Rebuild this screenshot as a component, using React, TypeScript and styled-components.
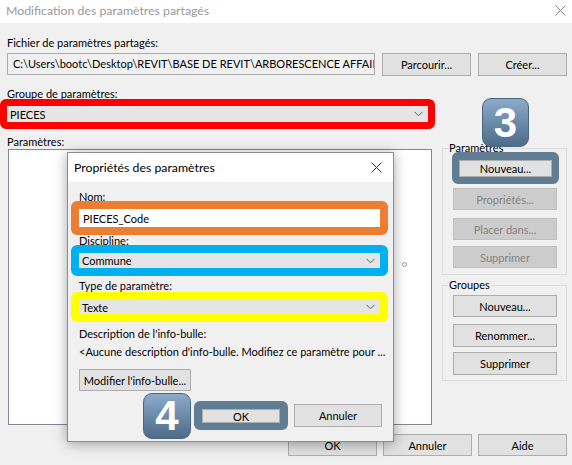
import React from "react";
import styled, { createGlobalStyle } from "styled-components";

const GlobalStyle = createGlobalStyle`
  body {
    margin: 0;
    background: #f0f0f0;
  }
  * {
    box-sizing: border-box;
  }
`;

const Chevron = () => (
  <svg width="9" height="6" viewBox="0 0 9 6">
    <path d="M0.5 0.8 L4.5 4.8 L8.5 0.8" fill="none" stroke="#606060" strokeWidth="1" />
  </svg>
);

const CloseIcon = ({ color }: { color: string }) => (
  <svg width="11" height="11" viewBox="0 0 11 11">
    <path d="M0.5 0.5 L10.5 10.5 M10.5 0.5 L0.5 10.5" stroke={color} strokeWidth="1" />
  </svg>
);

const Window = styled.div`
  position: relative;
  width: 572px;
  height: 465px;
  overflow: hidden;
  background: #f0f0f0;
  font-family: Lato, "Noto Sans", sans-serif;
  font-size: 11px;
  color: #000;
  display: flex;
  flex-direction: column;
`;

const TitleBar = styled.div`
  height: 23px;
  background: #fff;
  display: flex;
  align-items: center;
  justify-content: space-between;
  padding: 0 6px 2px 6px;
`;

const WindowTitle = styled.span`
  font-size: 12.3px;
  color: #9a9a9a;
`;

const Body = styled.div`
  display: flex;
  flex-direction: column;
  padding: 0 5px 0 7px;
`;

const Label = styled.div<{ $top: number }>`
  line-height: 14px;
  height: 14px;
  margin-top: ${({ $top }) => $top}px;
  white-space: nowrap;
`;

const Row = styled.div`
  display: flex;
  gap: 7px;
`;

const PathBox = styled.div`
  width: 368px;
  height: 22px;
  border: 1px solid #a9a9a9;
  background: #f0f0f0;
  padding: 0 5px;
  line-height: 20px;
  white-space: nowrap;
  overflow: hidden;
  text-overflow: clip;
`;

const Button = styled.div<{ $w: number; $h?: number; $disabled?: boolean }>`
  width: ${({ $w }) => $w}px;
  height: ${({ $h }) => $h ?? 22}px;
  background: ${({ $disabled }) => ($disabled ? "#cccccc" : "#e1e1e1")};
  border: 1px solid ${({ $disabled }) => ($disabled ? "#bfbfbf" : "#adadad")};
  color: ${({ $disabled }) => ($disabled ? "#838383" : "#000")};
  display: flex;
  align-items: center;
  justify-content: center;
  white-space: nowrap;
  flex-shrink: 0;
`;

const Highlight = styled.div<{ $color: string; $w: number; $bw: string; $radius?: number }>`
  width: ${({ $w }) => $w}px;
  border-style: solid;
  border-color: ${({ $color }) => $color};
  border-width: ${({ $bw }) => $bw};
  border-radius: ${({ $radius }) => $radius ?? 6}px;
  flex-shrink: 0;
`;

const Combo = styled.div<{ $h: number }>`
  height: ${({ $h }) => $h}px;
  background: #e5e5e5;
  display: flex;
  align-items: center;
  justify-content: space-between;
  padding: 0 5px 0 3px;
  white-space: nowrap;
`;

const TextField = styled.div`
  height: 18px;
  background: #fff;
  display: flex;
  align-items: center;
  padding: 0 4px;
`;

const MainRow = styled.div`
  display: flex;
  height: 277px;
  margin-top: -1px;
`;

const ListBox = styled.div`
  position: relative;
  width: 424px;
  height: 276px;
  margin: 1px 0 0 1px;
  background: #fff;
  border: 1px solid #828790;
`;

const Speck = styled.span`
  position: absolute;
  left: 393px;
  top: 112px;
  width: 5px;
  height: 5px;
  border: 1px solid #9a9a9a;
  border-radius: 50%;
`;

const SideColumn = styled.div`
  display: flex;
  flex-direction: column;
  gap: 10px;
  margin-left: 10px;
  width: 125px;
`;

const GroupBox = styled.div<{ $h: number }>`
  height: ${({ $h }) => $h}px;
  border: 1px solid #dcdcdc;
  display: flex;
  flex-direction: column;
  align-items: flex-start;
  padding-left: 10px;
`;

const Caption = styled.span`
  line-height: 14px;
  margin: -8px 0 0 -5px;
  padding: 0 1px;
  background: #f0f0f0;
  position: relative;
  z-index: 0;
`;

const Gap = styled.div<{ $h: number }>`
  height: ${({ $h }) => $h}px;
  flex-shrink: 0;
`;

const FooterRow = styled.div`
  display: flex;
  justify-content: flex-end;
  gap: 6px;
  margin-top: 9px;
`;

const Badge = styled.div<{ $x: number; $y: number; $w: number; $h: number }>`
  position: absolute;
  left: ${({ $x }) => $x}px;
  top: ${({ $y }) => $y}px;
  width: ${({ $w }) => $w}px;
  height: ${({ $h }) => $h}px;
  border-radius: 9px;
  border: 1px solid #4a6680;
  background: linear-gradient(180deg, #8cabc9 0%, #6e8ead 45%, #4e6b87 100%);
  color: #fff;
  font-family: "Liberation Sans", Arial, sans-serif;
  font-weight: bold;
  font-size: 42px;
  display: flex;
  align-items: center;
  justify-content: center;
  z-index: 5;
`;

const Dialog = styled.div`
  position: absolute;
  left: 67px;
  top: 152px;
  width: 327px;
  height: 290px;
  border: 1px solid #8c8c8c;
  background: #f0f0f0;
  box-shadow: 0 2px 12px rgba(0, 0, 0, 0.35);
  display: flex;
  flex-direction: column;
  z-index: 3;
`;

const DialogTitleBar = styled.div`
  height: 29px;
  background: #fff;
  display: flex;
  align-items: center;
  justify-content: space-between;
  padding: 0 11px 0 6px;
  font-size: 12.3px;
  flex-shrink: 0;
`;

const DialogBody = styled.div`
  display: flex;
  flex-direction: column;
  align-items: flex-start;
  padding: 0 11px 0 11px;
`;

const FieldBox = styled(Highlight)`
  margin-left: -8px;
`;

const DialogButtons = styled.div`
  display: flex;
  align-self: stretch;
  justify-content: flex-end;
  align-items: center;
  gap: 6px;
  margin-top: 10px;
`;

export default function App() {
  return (
    <Window>
      <GlobalStyle />
      <TitleBar>
        <WindowTitle>Modification des paramètres partagés</WindowTitle>
        <CloseIcon color="#8a8a8a" />
      </TitleBar>
      <Body>
        <Label $top={13}>Fichier de paramètres partagés:</Label>
        <Row style={{ marginTop: 3 }}>
          <PathBox>C:\Users\bootc\Desktop\REVIT\BASE DE REVIT\ARBORESCENCE AFFAIRE\</PathBox>
          <Button $w={89} $h={23}>Parcourir...</Button>
          <Button $w={89} $h={23}>Créer...</Button>
        </Row>
        <Label $top={11}>Groupe de paramètres:</Label>
        <Highlight $color="#ff0000" $w={435} $bw="7px" style={{ marginLeft: -7, marginTop: -2 }}>
          <Combo $h={16}>
            <span>PIECES</span>
            <Chevron />
          </Combo>
        </Highlight>
        <Label $top={6}>Paramètres:</Label>
        <MainRow>
          <ListBox>
            <Speck />
          </ListBox>
          <SideColumn>
            <GroupBox $h={127}>
              <Caption>Paramètres</Caption>
              <Highlight $color="#607d94" $w={107} $bw="8px 7px 7px 7px" style={{ marginLeft: -1, marginTop: -3, zIndex: 1 }}>
                <Button $w={93} $h={17}>Nouveau...</Button>
              </Highlight>
              <Gap $h={4} />
              <Button $w={104} $disabled>Propriétés...</Button>
              <Gap $h={8} />
              <Button $w={104} $disabled>Placer dans...</Button>
              <Gap $h={6} />
              <Button $w={104} $disabled>Supprimer</Button>
            </GroupBox>
            <GroupBox $h={96}>
              <Caption>Groupes</Caption>
              <Gap $h={3} />
              <Button $w={104}>Nouveau...</Button>
              <Gap $h={7} />
              <Button $w={104} $h={23}>Renommer...</Button>
              <Gap $h={5} />
              <Button $w={104} $h={23}>Supprimer</Button>
            </GroupBox>
          </SideColumn>
        </MainRow>
        <FooterRow>
          <Button $w={89}>OK</Button>
          <Button $w={89}>Annuler</Button>
          <Button $w={89}>Aide</Button>
        </FooterRow>
      </Body>

      <Badge $x={482} $y={98} $w={47} $h={49}>3</Badge>

      <Dialog>
        <DialogTitleBar>
          <span>Propriétés des paramètres</span>
          <CloseIcon color="#333" />
        </DialogTitleBar>
        <DialogBody>
          <Label $top={8}>Nom:</Label>
          <FieldBox $color="#ed7d31" $w={317} $bw="8px" style={{ marginTop: -3 }}>
            <TextField>PIECES_Code</TextField>
          </FieldBox>
          <Label $top={-1}>Discipline:</Label>
          <FieldBox $color="#00b0f0" $w={317} $bw="8px" style={{ marginTop: -3 }}>
            <Combo $h={15}>
              <span>Commune</span>
              <Chevron />
            </Combo>
          </FieldBox>
          <Label $top={3}>Type de paramètre:</Label>
          <FieldBox $color="#ffff00" $w={317} $bw="8px" style={{ marginTop: -1 }}>
            <Combo $h={14}>
              <span>Texte</span>
              <Chevron />
            </Combo>
          </FieldBox>
          <Label $top={5}>Description de l'info-bulle:</Label>
          <Label $top={4}>&lt;Aucune description d'info-bulle. Modifiez ce paramètre pour ...</Label>
          <Gap $h={10} />
          <Button $w={112}>Modifier l'info-bulle...</Button>
          <DialogButtons>
            <Highlight $color="#607d94" $w={94} $bw="8px 8px 7px 8px">
              <Button $w={78} $h={14}>OK</Button>
            </Highlight>
            <Button $w={88} $h={23}>Annuler</Button>
          </DialogButtons>
        </DialogBody>
        <Badge $x={75} $y={240} $w={48} $h={46}>4</Badge>
      </Dialog>
    </Window>
  );
}
